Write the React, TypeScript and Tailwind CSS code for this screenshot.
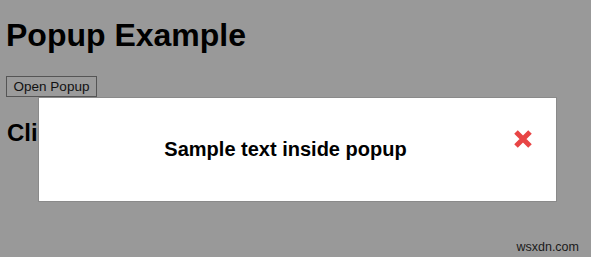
import { useState } from "react";

// close glyph, heavy "x"
const CloseIcon = () => (
  <svg width="20" height="20" viewBox="0 0 20 20" aria-hidden="true">
    <path
      d="M3 3 L17 17 M17 3 L3 17"
      stroke="#e84545"
      strokeWidth="5"
      strokeLinecap="butt"
      fill="none"
    />
  </svg>
);

export default function App() {
  const [open, setOpen] = useState(true);

  return (
    <div
      className="relative w-[591px] h-[257px] overflow-hidden bg-[#999999] text-black"
      style={{ fontFamily: '"Liberation Sans", Arial, sans-serif' }}
    >
      <div className="pl-[6px] pt-[17px]">
        <h1 className="text-[32px] leading-[37px] font-bold">Popup Example</h1>
        <button
          type="button"
          onClick={() => setOpen(true)}
          className="mt-[22px] w-[91px] h-[21px] border border-[#555555] bg-[#9b9b9b] text-[13.5px] leading-[15px] text-[#111111]"
        >
          Open Popup
        </button>
        <h2 className="mt-[21px] pl-[1px] text-[24px] leading-[28px] font-bold">
          Click on the button to open the popup
        </h2>
      </div>

      {open && (
        <div className="absolute left-[38px] top-[97px] w-[519px] h-[105px] bg-white border border-[#8a8a8a] flex items-center">
          <div className="flex-1 pr-[24px] text-center text-[20px] leading-[23px] font-bold">
            Sample text inside popup
          </div>
          <button
            type="button"
            onClick={() => setOpen(false)}
            className="absolute left-[474px] top-[31px] w-[20px] h-[20px]"
          >
            <CloseIcon />
          </button>
        </div>
      )}

      <div className="absolute right-[12px] bottom-[3px] text-[12.5px] leading-[14px] text-[#1a1a1a]">
        wsxdn.com
      </div>
    </div>
  );
}
